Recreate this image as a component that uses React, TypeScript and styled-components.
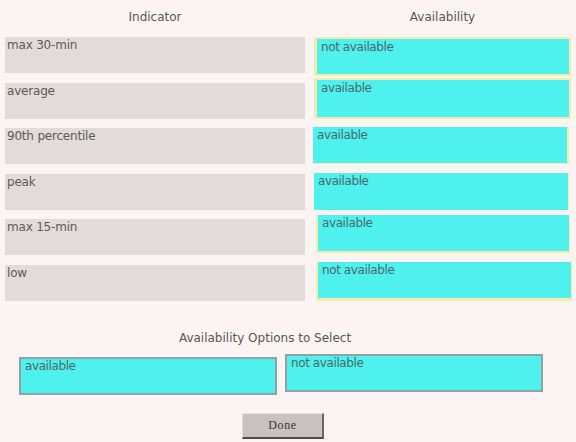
import React from "react";
import styled, { createGlobalStyle } from "styled-components";

const Global = createGlobalStyle`
  html, body { margin: 0; padding: 0; background: #fcf4f2; }
  body { font-family: "DejaVu Sans", Tahoma, sans-serif; }
`;

const Page = styled.div`
  width: 576px;
  height: 442px;
  padding: 0 0 0 5px;
  box-sizing: border-box;
  overflow: hidden;
  color: #5b5757;
`;

const Table = styled.div`
  display: grid;
  grid-template-columns: 300px 266px;
  grid-template-rows: 27.4px repeat(6, 36px);
  row-gap: 9.6px;
  column-gap: 0;
`;

const HeaderCell = styled.div<{ $shift?: number }>`
  font-size: 12px;
  text-align: center;
  padding-top: 10px;
  margin-left: ${(p) => p.$shift ?? 0}px;
  color: #5a5656;
`;

const IndicatorBox = styled.div`
  background: #e3dbd9;
  height: 36px;
  box-sizing: border-box;
  padding: 1px 0 0 2px;
  font-size: 12px;
  letter-spacing: -0.2px;
  color: #5e5959;
`;

type Sides = { t: number; r: number; b: number; l: number };

const AvailBox = styled.div<{
  $x: number;
  $y: number;
  $w: number;
  $h: number;
  $bd: Sides;
}>`
  align-self: start;
  margin-left: ${(p) => p.$x}px;
  margin-top: ${(p) => p.$y}px;
  width: ${(p) => p.$w}px;
  height: ${(p) => p.$h}px;
  box-sizing: border-box;
  background: #4ff1ef;
  border-style: solid;
  border-color: #f2eda8;
  border-width: ${(p) => `${p.$bd.t}px ${p.$bd.r}px ${p.$bd.b}px ${p.$bd.l}px`};
  padding: 1px 0 0 4px;
  font-size: 12px;
  letter-spacing: -0.4px;
  color: #4d6868;
`;

const OptionsTitle = styled.div`
  width: 520px;
  text-align: center;
  margin-top: 30px;
  font-size: 12px;
  color: #5a5656;
`;

const OptionsRow = styled.div`
  display: flex;
  align-items: flex-start;
  gap: 8px;
  margin-top: 9px;
  padding-left: 14px;
`;

const OptionBox = styled.div<{ $y: number }>`
  width: 258px;
  height: 38px;
  box-sizing: border-box;
  margin-top: ${(p) => p.$y}px;
  background: #4ff1ef;
  border: 2px solid #8fa3a2;
  padding: 0 0 0 4px;
  font-size: 12px;
  letter-spacing: -0.4px;
  color: #4d6868;
`;

const ButtonRow = styled.div`
  display: flex;
  padding-left: 237px;
  margin-top: 18px;
`;

const DoneButton = styled.button`
  width: 82px;
  height: 26px;
  box-sizing: border-box;
  background: #c9c0c0;
  border-style: solid;
  border-width: 1px 2px 2px 1px;
  border-color: #e8e2e2 #6d6666 #4e4848 #e0dada;
  font-family: "Liberation Serif", "Times New Roman", serif;
  font-size: 12px;
  letter-spacing: 0.6px;
  color: #3b3535;
  padding: 0;
`;

const rows = [
  { label: "max 30-min", value: "not available", x: 9, y: 0, w: 257, h: 39, bd: { t: 2, r: 2, b: 2, l: 3 } },
  { label: "average", value: "available", x: 9, y: -5, w: 257, h: 41, bd: { t: 2, r: 2, b: 2, l: 3 } },
  { label: "90th percentile", value: "available", x: 8, y: -1, w: 256, h: 37, bd: { t: 0, r: 2, b: 1, l: 0 } },
  { label: "peak", value: "available", x: 9, y: -1, w: 255, h: 37, bd: { t: 0, r: 1, b: 0, l: 0 } },
  { label: "max 15-min", value: "available", x: 11, y: -4, w: 254, h: 38, bd: { t: 0, r: 1, b: 2, l: 2 } },
  { label: "low", value: "not available", x: 11, y: -3, w: 256, h: 39, bd: { t: 0, r: 1, b: 3, l: 2 } },
];

export default function App() {
  return (
    <Page>
      <Global />
      <Table>
        <HeaderCell>Indicator</HeaderCell>
        <HeaderCell $shift={9}>Availability</HeaderCell>
        {rows.map((r) => (
          <React.Fragment key={r.label}>
            <IndicatorBox>{r.label}</IndicatorBox>
            <AvailBox $x={r.x} $y={r.y} $w={r.w} $h={r.h} $bd={r.bd}>
              {r.value}
            </AvailBox>
          </React.Fragment>
        ))}
      </Table>
      <OptionsTitle>Availability Options to Select</OptionsTitle>
      <OptionsRow>
        <OptionBox $y={3}>available</OptionBox>
        <OptionBox $y={0}>not available</OptionBox>
      </OptionsRow>
      <ButtonRow>
        <DoneButton>Done</DoneButton>
      </ButtonRow>
    </Page>
  );
}
